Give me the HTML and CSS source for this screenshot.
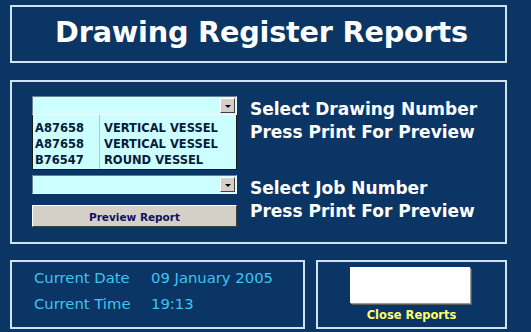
FILE: index.html
```html
<!DOCTYPE html>
<html lang="en">
<head>
  <meta charset="UTF-8" />
  <title>Drawing Register Reports</title>
  <link rel="stylesheet" href="styles.css">
</head>
<body>
  <div class="form">
    <div class="panel header">
      <h1>Drawing Register Reports</h1>
    </div>

    <div class="panel main">
      <div class="controls">
        <div class="combo">
          <span class="arrow"></span>
        </div>
        <div class="list">
          <div class="row"><span class="code">A87658</span><span class="desc">VERTICAL VESSEL</span></div>
          <div class="row"><span class="code">A87658</span><span class="desc">VERTICAL VESSEL</span></div>
          <div class="row"><span class="code">B76547</span><span class="desc">ROUND VESSEL</span></div>
        </div>
      </div>
      <div class="label">Select Drawing Number<br>Press Print For Preview</div>

      <div class="controls">
        <div class="combo">
          <span class="arrow"></span>
        </div>
        <button class="preview">Preview Report</button>
      </div>
      <div class="label">Select Job Number<br>Press Print For Preview</div>
    </div>

    <div class="bottom">
      <div class="panel info">
        <div class="line"><span class="key">Current Date</span><span>09 January 2005</span></div>
        <div class="line"><span class="key">Current Time</span><span>19:13</span></div>
      </div>
      <div class="panel close">
        <button class="close-btn"></button>
        <span class="close-text">Close Reports</span>
      </div>
    </div>
  </div>
</body>
</html>
```

FILE: styles.css
```css
body {
  margin: 0;
  background: #0b3565;
  font-family: "DejaVu Sans", Verdana, sans-serif;
  width: 531px;
  height: 332px;
  overflow: hidden;
}

.form {
  display: flex;
  flex-direction: column;
  padding: 5px 0 0 10px;
  width: 497px;
}

.panel {
  border: 2px solid #cfe2ef;
  box-sizing: border-box;
}

.header {
  height: 58px;
  display: flex;
  align-items: center;
  justify-content: center;
}

h1 {
  margin: 0 0 0 6px;
  color: #fff;
  font-size: 28.7px;
  font-weight: bold;
  letter-spacing: -0.2px;
  padding-bottom: 4px;
}

.main {
  margin-top: 17px;
  height: 164px;
  display: grid;
  grid-template-columns: 205px 1fr;
  grid-template-rows: 74px 53px;
  row-gap: 5px;
  column-gap: 13px;
  padding: 14px 0 0 20px;
}

.controls {
  display: flex;
  flex-direction: column;
}

.combo {
  height: 19px;
  background: #ccffff;
  border: 1px solid;
  border-color: #6a7f90 #e8ffff #e8ffff #6a7f90;
  box-sizing: border-box;
  display: flex;
  justify-content: flex-end;
  padding: 1px;
}

.arrow {
  width: 15px;
  background: #d4d0c8;
  border: 1px solid;
  border-color: #fff #404040 #404040 #fff;
  box-sizing: border-box;
  position: relative;
}

.arrow::after {
  content: "";
  position: absolute;
  left: 4px;
  top: 6px;
  border-left: 3px solid transparent;
  border-right: 3px solid transparent;
  border-top: 3px solid #000;
}

/* column divider drawn behind the rows */
.list {
  height: 55px;
  background: linear-gradient(to right, transparent 66px, #b8c8c8 66px, #b8c8c8 67px, transparent 67px), #ccffff;
  border: 1px solid #1a1a1a;
  border-top: none;
  box-sizing: border-box;
  padding-top: 5px;
}

.row {
  display: flex;
  height: 16px;
  align-items: center;
  font-size: 11.5px;
  font-weight: bold;
  color: #0a1a3a;
}

.code {
  width: 67px;
  padding-left: 2px;
  box-sizing: border-box;
}

.desc {
  padding-left: 4px;
}

.label {
  color: #fff;
  font-weight: bold;
  font-size: 17px;
  line-height: 23px;
  margin-top: 2px;
}

.preview {
  margin-top: 11px;
  height: 22px;
  background: #d4d0c8;
  border: 1px solid;
  border-color: #fff #404040 #404040 #fff;
  color: #101060;
  font-family: "DejaVu Sans", Verdana, sans-serif;
  font-weight: bold;
  font-size: 10.5px;
  padding: 2px 0 0;
}

.bottom {
  display: flex;
  gap: 11px;
  margin-top: 16px;
}

.info {
  width: 295px;
  height: 69px;
  padding: 2px 0 0 22px;
  color: #3cc6f2;
  font-size: 14.8px;
}

.line {
  display: flex;
  height: 26px;
  align-items: center;
}

.key {
  width: 117px;
}

.close {
  width: 191px;
  height: 69px;
  display: flex;
  flex-direction: column;
  align-items: center;
  padding-top: 5px;
}

.close-btn {
  width: 120px;
  height: 36px;
  background: #fff;
  border: none;
  box-shadow: 1px 1px 0 #9a9a9a, 2px 2px 0 #5a5a5a;
  margin-right: 4px;
}

.close-text {
  color: #ffff66;
  font-weight: bold;
  font-size: 11.5px;
  margin-top: 5px;
}
```
